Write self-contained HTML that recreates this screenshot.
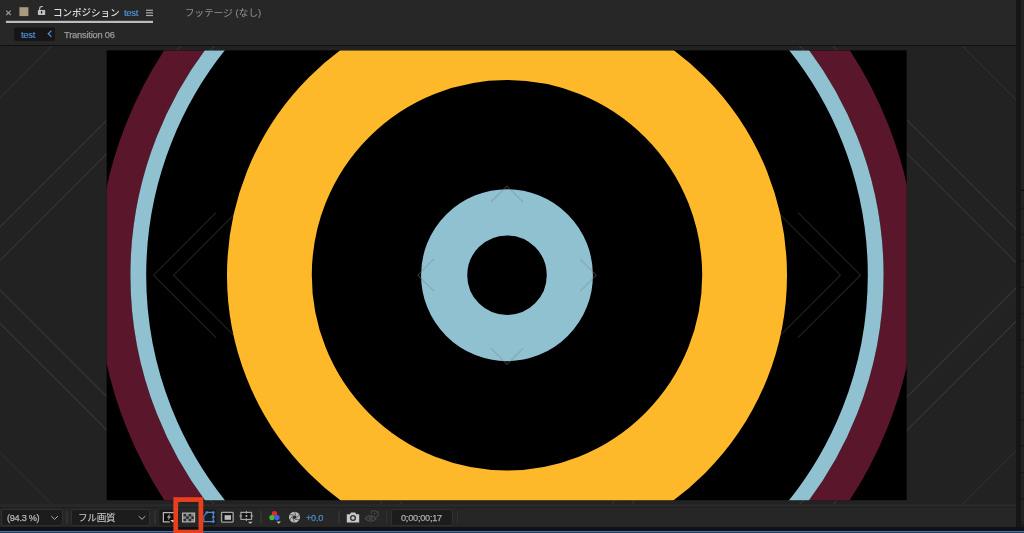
<!DOCTYPE html>
<html lang="ja">
<head>
<meta charset="utf-8">
<title>コンポジション test</title>
<style>
html,body{margin:0;padding:0;background:#222;}
body{width:1024px;height:533px;overflow:hidden;position:relative;font-family:"Liberation Sans","Noto Sans CJK JP",sans-serif;}
#app{position:absolute;left:0;top:0;width:1024px;height:533px;overflow:hidden;background:#222;}
.t{will-change:transform;-webkit-text-stroke:0.25px currentColor;}
.abs{position:absolute;}
#header{left:0;top:0;width:1016px;height:45px;background:#272727;}
#hline{left:0;top:44.5px;width:1016px;height:1.5px;background:#101010;}
#viewer{left:0;top:46px;width:1016px;height:458px;background:#222222;}
#tbtop{left:0;top:503.6px;width:1016px;height:3.4px;background:#282828;}
#tbline{left:0;top:506.8px;width:1016px;height:1px;background:#1f1f1f;}
#toolbar{left:0;top:507.6px;width:1016px;height:20px;background:#262626;}
#darkb{left:0;top:527.4px;width:1024px;height:5.6px;background:#111;}
#blueb{left:0;top:530.6px;width:1024px;height:1.8px;background:#3f70ba;}
#blueb2{left:0;top:532.4px;width:1024px;height:0.6px;background:#243a5e;}
#gap{left:1016.2px;top:0;width:4.4px;height:531px;background:#161616;}
#rpanel{left:1020.6px;top:0;width:4px;height:531px;background:#222;}
.t{position:absolute;white-space:nowrap;line-height:1;}
.dd{position:absolute;box-sizing:border-box;background:#1c1c1c;border:1px solid #303030;border-radius:3px;}
.sep{position:absolute;width:1.5px;background:#313131;top:510.8px;height:13.2px;}
</style>
</head>
<body>
<div id="app">
  <div class="abs" id="header"></div>
  <div class="abs" id="viewer"></div>
  <div class="abs" id="hline"></div>

  <!-- header content -->
  <svg class="abs" style="left:0;top:0" width="170" height="46" viewBox="0 0 170 46">
    <path d="M6.2 10.6 L10.8 15 M10.8 10.6 L6.2 15" stroke="#9c9c9c" stroke-width="1.1" fill="none"/>
    <rect x="19.4" y="7.2" width="9" height="8.9" fill="#a99a7d"/>
    <!-- lock -->
    <rect x="37.9" y="9.9" width="7.3" height="5.1" rx="0.4" fill="#c0c0c0"/>
    <path d="M39.7 10.2 V8.3 Q39.7 6.7 41.2 6.6 L42.8 6.5" stroke="#c0c0c0" stroke-width="1.2" fill="none"/>
    <path d="M41.6 11 Q42.6 11.2 42.3 12.6 L41.6 14 L40.9 12.6 Q40.6 11.2 41.6 11 Z" fill="#1c1c1c"/>
    <!-- underline -->
    <rect x="5.9" y="20.8" width="147.1" height="2.2" fill="#bcbcbc"/>
    <!-- hamburger -->
    <rect x="146" y="9.65" width="7" height="1.2" fill="#ababab"/>
    <rect x="146" y="12.25" width="7" height="1.2" fill="#ababab"/>
    <rect x="146" y="14.9" width="7" height="1.2" fill="#ababab"/>
    <!-- tab box -->
    <rect x="14" y="27.5" width="41" height="13.5" rx="2" fill="#161616"/>
    <path d="M51.4 30.8 L48.2 33.8 L51.4 36.8" stroke="#4d90d6" stroke-width="1.2" fill="none"/>
  </svg>
  <div class="t" id="t-comp" style="left:52.9px;top:8.1px;font-size:9.5px;color:#dedede;letter-spacing:0px;font-weight:500;-webkit-text-stroke:0;">コンポジション</div>
  <div class="t" id="t-test1" style="left:123.6px;top:8px;font-size:9.5px;color:#4f98e2;-webkit-text-stroke-width:0.1px;letter-spacing:-0.3px;">test</div>
  <div class="t" id="t-foot" style="left:185px;top:8.3px;font-size:9.5px;color:#8e8e8e;letter-spacing:0.1px;-webkit-text-stroke-width:0.1px;">フッテージ (なし)</div>
  <div class="t" id="t-test2" style="left:21.3px;top:29.9px;font-size:9.5px;color:#4f98e2;-webkit-text-stroke-width:0.1px;letter-spacing:-0.3px;">test</div>
  <div class="t" id="t-trans" style="left:64.2px;top:31.2px;font-size:9.3px;color:#9a9a9a;letter-spacing:-0.2px;">Transition 06</div>

  <!-- viewer graphics -->
  <svg class="abs" id="vsvg" style="left:0;top:46px" width="1016" height="458" viewBox="0 46 1016 458">
    <defs>
      <clipPath id="cc"><rect x="106.7" y="50.4" width="800" height="449.8"/></clipPath>
      <clipPath id="lc"><rect x="0" y="46" width="106.7" height="457.6"/></clipPath>
      <clipPath id="rc"><rect x="906.7" y="46" width="109.3" height="457.6"/></clipPath>
    </defs>
    <!-- backdrop lines -->
    <g stroke="#ffffff" stroke-width="1.1" fill="none">
      <path stroke-opacity="0.06" d="M-177.5 275.2 L507 -409.3 L1191.5 275.2 L507 959.7 Z"/>
      <path stroke-opacity="0.095" d="M-48.2 275.2 L507 -280 L1062.2 275.2 L507 830.4 Z"/>
      <path stroke-opacity="0.095" d="M-14.7 275.2 L507 -246.5 L1028.7 275.2 L507 796.9 Z"/>
      <path stroke-opacity="0.07" d="M379.4 501 L383.4 505 M399.4 501 L403.4 505 M634.6 501 L630.6 505 M614.6 501 L610.6 505"/>
    </g>
    <!-- composition -->
    <rect x="106.7" y="50.4" width="800" height="449.8" fill="#000"/>
    <g clip-path="url(#cc)">
      <circle cx="507" cy="275.2" r="393.2" fill="none" stroke="#5a172b" stroke-width="33.4"/>
      <circle cx="507" cy="275.2" r="368.7" fill="none" stroke="#8fc1d1" stroke-width="15.8"/>
      <g stroke="#ffffff" stroke-opacity="0.13" stroke-width="1.15" fill="none">
        <path d="M216 212.7 L153.5 275.2 L216 337.7"/>
        <path d="M236 212.7 L173.6 275.2 L236 337.7"/>
        <path d="M798 212.7 L860.5 275.2 L798 337.7"/>
        <path d="M778 212.7 L840.4 275.2 L778 337.7"/>
      </g>
      <circle cx="507" cy="275.2" r="237.6" fill="none" stroke="#fdb92a" stroke-width="84.8"/>
      <circle cx="507" cy="275.2" r="62.85" fill="none" stroke="#8fc1d1" stroke-width="46.2"/>
      <g stroke="#808080" stroke-opacity="0.4" stroke-width="1.15" fill="none">
        <path d="M433.8 259.2 L417.8 275.2 L433.8 291.2"/>
        <path d="M580.2 259.2 L596.2 275.2 L580.2 291.2"/>
        <path d="M491 202 L507 186 L523 202"/>
        <path d="M491 348.4 L507 364.4 L523 348.4"/>
      </g>
    </g>
  </svg>

  <!-- toolbar -->
  <div class="abs" id="tbtop"></div>
  <div class="abs" id="tbline"></div>
  <div class="abs" id="toolbar"></div>

  <div class="dd" style="left:0.6px;top:509.1px;width:62.5px;height:17px;"></div>
  <div class="t" id="t-zoom" style="left:6.6px;top:513.6px;font-size:9.2px;color:#b6b6b6;letter-spacing:-0.3px;">(94.3 %)</div>
  <div class="sep" style="left:66.3px;"></div>
  <div class="dd" style="left:71.1px;top:509.1px;width:79.4px;height:17px;"></div>
  <div class="t" id="t-qual" style="left:78.2px;top:513.2px;font-size:9.6px;color:#c8c8c8;letter-spacing:-0.25px;-webkit-text-stroke-width:0.1px;">フル画質</div>
  <div class="sep" style="left:154px;"></div>
  <div class="sep" style="left:260.3px;"></div>
  <div class="sep" style="left:338px;"></div>
  <div class="sep" style="left:385.7px;"></div>
  <div class="dd" style="left:391.1px;top:509.1px;width:62.1px;height:17px;"></div>
  <div class="t" id="t-tc" style="left:400.6px;top:514px;font-size:9.2px;color:#aaaaaa;letter-spacing:-0.25px;">0;00;00;17</div>
  <div class="sep" style="left:456.6px;"></div>
  <div class="t" id="t-exp" style="left:306px;top:514px;font-size:9.2px;color:#4b8bcb;letter-spacing:-0.3px;">+0.0</div>

  <svg class="abs" style="left:0;top:504px" width="480" height="29" viewBox="0 504 480 29">
    <!-- dropdown chevrons -->
    <path d="M51.3 516.1 L54.6 519.3 L57.9 516.1" stroke="#b0b0b0" stroke-width="1" fill="none"/>
    <path d="M138.7 516.1 L142 519.3 L145.3 516.1" stroke="#b0b0b0" stroke-width="1" fill="none"/>
    <!-- fast preview button -->
    <rect x="159.3" y="509.5" width="20" height="15.8" rx="2.5" fill="#1a1a1a"/>
    <rect x="163.4" y="512.6" width="11.4" height="9.3" fill="#0c0c0c"/>
    <path d="M175 512.6 H163.4 V521.9 H169.9" fill="none" stroke="#b4b4b4" stroke-width="1.2"/>
    <path d="M170.1 513.6 L166.7 517.5 L168.7 517.5 L167.6 520.6 L171.3 516.4 L169.2 516.4 Z" fill="#a4a4a4"/>
    <path d="M170.2 519.9 L174.8 519.9 L173 522.6 Z" fill="#cfcfcf"/>
    <!-- transparency grid -->
    <rect x="182.6" y="513.1" width="12" height="8.8" fill="#868686" stroke="#b8b8b8" stroke-width="1.1"/>
    <g fill="#2b2b2b">
      <rect x="183.5" y="513.9" width="2.5" height="2.5"/><rect x="188.7" y="513.9" width="2.5" height="2.5"/>
      <rect x="186.1" y="516.4" width="2.6" height="2.5"/><rect x="191.3" y="516.4" width="2.5" height="2.5"/>
      <rect x="183.5" y="518.9" width="2.5" height="2.3"/><rect x="188.7" y="518.9" width="2.5" height="2.3"/>
    </g>
    <!-- mask toggle -->
    <rect x="199" y="509.5" width="17.5" height="15.5" rx="2.5" fill="#1b1b1b"/>
    <path d="M203.8 521.6 L203.8 516.5 L206.8 512.4 L213.3 512.4 L213.3 521.6 Z" fill="none" stroke="#4a8ae0" stroke-width="1.1"/>
    <g fill="#4a8ae0"><circle cx="206.8" cy="512.5" r="1.2"/><circle cx="213.4" cy="512.5" r="1.3"/><circle cx="213.4" cy="517" r="1.3"/><circle cx="213.4" cy="521.6" r="1.3"/></g>
    <!-- region of interest -->
    <rect x="221.55" y="512.45" width="11.6" height="9.7" fill="#161616" stroke="#a2a2a2" stroke-width="1.3" rx="0.8"/>
    <rect x="224.6" y="515.2" width="6.4" height="4.6" fill="#bcbcbc"/>
    <!-- grid & guides -->
    <rect x="240.9" y="512.4" width="10.6" height="7" fill="#161616" stroke="#a2a2a2" stroke-width="1.2"/>
    <path d="M246.4 510.9 V513.6 M246.4 518.4 V521 M239.4 516 H242.2 M250.4 516 H253.2 M245.2 516 H247.6 M246.4 515 V517" stroke="#b0b0b0" stroke-width="1" fill="none"/>
    <path d="M248 521.8 L252.6 521.8 L250.3 524 Z" fill="#b4b4b4"/>
    <!-- rgb -->
    <circle cx="274.4" cy="513.8" r="2.7" fill="#e32b26"/>
    <circle cx="272" cy="517.6" r="2.7" fill="#3fbd3c"/>
    <circle cx="276.9" cy="517.6" r="2.7" fill="#3c63e8"/>
    <path d="M276.5 521.6 L280.9 521.6 L278.7 523.8 Z" fill="#c4c4c4"/>
    <!-- aperture -->
    <circle cx="294.5" cy="517.2" r="5.5" fill="#bdbdbd"/>
    <g stroke="#3a3a3a" stroke-width="0.7" fill="none">
      <path d="M294.5 511.7 L296.2 516.4"/><path d="M299.3 514.5 L296.4 518.4"/><path d="M299.3 519.9 L294.7 519.2"/>
      <path d="M294.5 522.7 L292.8 518"/><path d="M289.7 519.9 L292.6 516"/><path d="M289.7 514.5 L294.3 515.2"/>
    </g>
    <circle cx="294.5" cy="517.2" r="1.7" fill="#2a2a2a"/>
    <!-- camera -->
    <path d="M346.8 514.2 H350 L351 512.5 H355.2 L356.2 514.2 H359.2 V522.4 H346.8 Z" fill="#c8c8c8"/>
    <circle cx="353" cy="518" r="3" fill="#2b2b2b"/>
    <circle cx="353" cy="518" r="1.7" fill="#c8c8c8"/>
    <!-- show snapshot (disabled) -->
    <path d="M365.3 518.5 Q370.7 512.6 376.1 518.5 Q370.7 524.2 365.3 518.5 Z" fill="none" stroke="#474747" stroke-width="1.3"/>
    <circle cx="370.7" cy="518.4" r="2.1" fill="#3f3f3f"/>
    <path d="M371.4 513.4 V511.9 L372.4 510.8 H375.6 L376.4 511.9 H378.1 V516.3 H376.4" fill="none" stroke="#474747" stroke-width="1.1"/>
    <circle cx="374.6" cy="513.6" r="0.9" fill="#474747"/>
  </svg>


  <div class="abs" id="gap"></div>
  <div class="abs" id="rpanel"></div>
  <svg class="abs" style="left:1020.6px;top:0" width="4" height="531" viewBox="0 0 4 531">
    <g fill="#0c0c0c">
      <rect x="0" y="189.8" width="4" height="1.2"/>
    </g>
    <g fill="#141414">
      <rect x="0" y="207.6" width="4" height="1"/><rect x="0" y="234" width="4" height="1"/><rect x="0" y="260.4" width="4" height="1"/>
      <rect x="0" y="286.8" width="4" height="1"/><rect x="0" y="313.2" width="4" height="1"/><rect x="0" y="339.7" width="4" height="1"/>
      <rect x="0" y="366.1" width="4" height="1"/><rect x="0" y="392.6" width="4" height="1"/><rect x="0" y="419.1" width="4" height="1"/>
      <rect x="0" y="445.6" width="4" height="1"/><rect x="0" y="472.1" width="4" height="1"/><rect x="0" y="498.6" width="4" height="1"/>
      <rect x="0" y="525" width="4" height="1"/>
    </g>
  </svg>
  <div class="abs" id="darkb"></div>
  <div class="abs" id="blueb"></div>
  <div class="abs" id="blueb2"></div>
  <!-- red highlight box -->
  <svg class="abs" id="redbox" style="left:170px;top:494px" width="40" height="39" viewBox="170 494 40 39"><rect x="175.75" y="499.6" width="25.15" height="32.5" fill="none" stroke="#e8401f" stroke-width="4.75"/></svg>
</div>
</body>
</html>
